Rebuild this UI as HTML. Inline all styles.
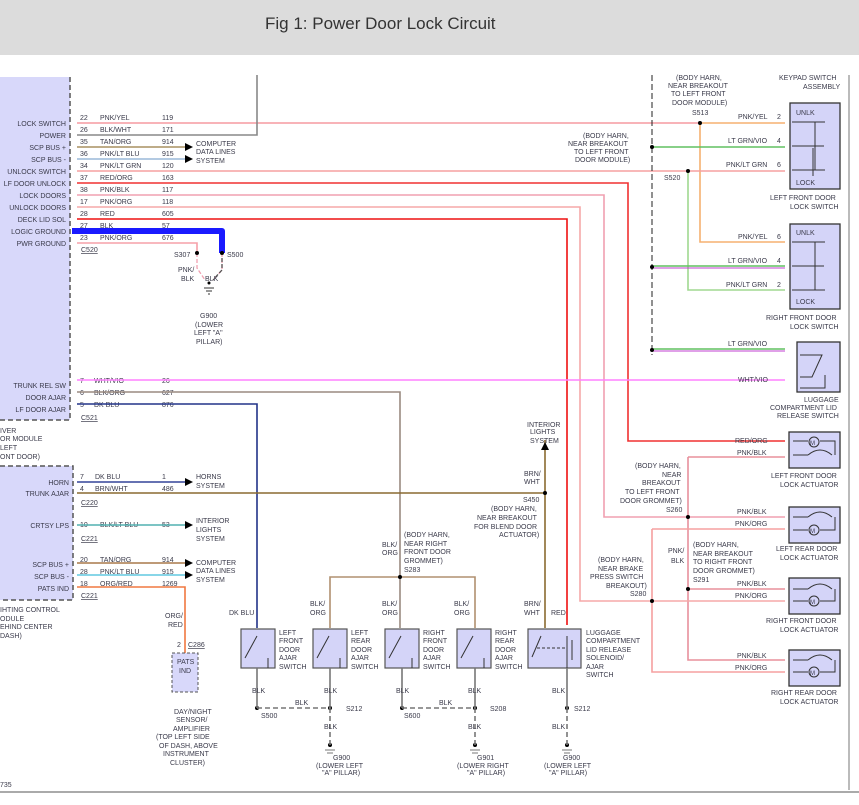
<!DOCTYPE html>
<html><head><meta charset="utf-8"><style>
body{margin:0;background:#fff;width:859px;height:805px;overflow:hidden;font-family:"Liberation Sans",sans-serif}
.hdr{position:absolute;left:0;top:0;width:859px;height:55px;background:#dcdcdc}
.hdr span{position:absolute;left:265px;top:14px;font-size:17px;color:#333}
svg{position:absolute;left:0;top:0}
svg text{font-family:"Liberation Sans",sans-serif;font-size:7px;fill:#3a3a4a}
</style></head><body>
<div class="hdr"><span>Fig 1: Power Door Lock Circuit</span></div>
<svg width="859" height="805" viewBox="0 0 859 805">
<!-- modules -->
<rect x="0" y="77" width="70" height="343" fill="#d8d8fa"/>
<line x1="70" y1="77" x2="70" y2="420" stroke="#555" stroke-dasharray="5,3" stroke-width="1.5"/>
<line x1="0" y1="420" x2="70" y2="420" stroke="#555" stroke-dasharray="5,3" stroke-width="1.5"/>
<rect x="0" y="466" width="73" height="134" fill="#d8d8fa"/>
<path d="M0 466H73V600H0" fill="none" stroke="#555" stroke-dasharray="5,3" stroke-width="1.5"/>
<line x1="849" y1="75" x2="849" y2="790" stroke="#777"/>
<line x1="0" y1="792" x2="859" y2="792" stroke="#555"/>
<text x="0" y="787">735</text>
<!-- labels left module 1 -->
<g text-anchor="end">
<text x="66" y="126">LOCK SWITCH</text><text x="66" y="138">POWER</text><text x="66" y="150">SCP BUS +</text><text x="66" y="162">SCP BUS -</text><text x="66" y="174">UNLOCK SWITCH</text><text x="66" y="186">LF DOOR UNLOCK</text><text x="66" y="198">LOCK DOORS</text><text x="66" y="210">UNLOCK DOORS</text><text x="66" y="222">DECK LID SOL</text><text x="66" y="234">LOGIC GROUND</text><text x="66" y="246">PWR GROUND</text>
<text x="66" y="388">TRUNK REL SW</text><text x="66" y="400">DOOR AJAR</text><text x="66" y="412">LF DOOR AJAR</text>
<text x="69" y="485">HORN</text><text x="69" y="496">TRUNK AJAR</text><text x="69" y="528">CRTSY LPS</text><text x="69" y="567">SCP BUS +</text><text x="69" y="579">SCP BUS -</text><text x="69" y="591">PATS IND</text>
</g>
<g>
<text x="80" y="120">22</text><text x="100" y="120">PNK/YEL</text><text x="162" y="120">119</text>
<text x="80" y="132">26</text><text x="100" y="132">BLK/WHT</text><text x="162" y="132">171</text>
<text x="80" y="144">35</text><text x="100" y="144">TAN/ORG</text><text x="162" y="144">914</text>
<text x="80" y="156">36</text><text x="100" y="156">PNK/LT BLU</text><text x="162" y="156">915</text>
<text x="80" y="168">34</text><text x="100" y="168">PNK/LT GRN</text><text x="162" y="168">120</text>
<text x="80" y="180">37</text><text x="100" y="180">RED/ORG</text><text x="162" y="180">163</text>
<text x="80" y="192">38</text><text x="100" y="192">PNK/BLK</text><text x="162" y="192">117</text>
<text x="80" y="204">17</text><text x="100" y="204">PNK/ORG</text><text x="162" y="204">118</text>
<text x="80" y="216">28</text><text x="100" y="216">RED</text><text x="162" y="216">605</text>
<text x="80" y="228">27</text><text x="100" y="228">BLK</text><text x="162" y="228">57</text>
<text x="80" y="240">23</text><text x="100" y="240">PNK/ORG</text><text x="162" y="240">676</text>
<text x="81" y="252" text-decoration="underline">C520</text>
<text x="80" y="383">7</text><text x="94" y="383">WHT/VIO</text><text x="162" y="383">26</text>
<text x="80" y="395">6</text><text x="94" y="395">BLK/ORG</text><text x="162" y="395">627</text>
<text x="80" y="407">5</text><text x="94" y="407">DK BLU</text><text x="162" y="407">876</text>
<text x="81" y="420" text-decoration="underline">C521</text>
<text x="0" y="433">IVER</text><text x="0" y="441">OR MODULE</text><text x="0" y="450">LEFT</text><text x="0" y="459">ONT DOOR)</text>
<text x="80" y="479">7</text><text x="95" y="479">DK BLU</text><text x="162" y="479">1</text>
<text x="80" y="491">4</text><text x="95" y="491">BRN/WHT</text><text x="162" y="491">486</text>
<text x="81" y="505" text-decoration="underline">C220</text>
<text x="80" y="527">10</text><text x="100" y="527">BLK/LT BLU</text><text x="162" y="527">53</text>
<text x="81" y="541" text-decoration="underline">C221</text>
<text x="80" y="562">20</text><text x="100" y="562">TAN/ORG</text><text x="162" y="562">914</text>
<text x="80" y="574">28</text><text x="100" y="574">PNK/LT BLU</text><text x="162" y="574">915</text>
<text x="80" y="586">18</text><text x="100" y="586">ORG/RED</text><text x="162" y="586">1269</text>
<text x="81" y="598" text-decoration="underline">C221</text>
<text x="0" y="612">IHTING CONTROL</text><text x="0" y="621">ODULE</text><text x="0" y="629">EHIND CENTER</text><text x="0" y="638">DASH)</text>
</g>
<!-- wires top -->
<g fill="none" stroke-width="1.6">
<path d="M77 123H700" stroke="#f59aa0"/><path d="M700 123H785M700 123V242H785" stroke="#f5b070"/>
<path d="M77 135H257V75" stroke="#888"/>
<path d="M77 147H187" stroke="#a89060"/><path d="M77 159H187" stroke="#9ab8d8"/>
<path d="M77 171H785" stroke="#f5a0a0"/><path d="M688 171V290H785" stroke="#a0d890"/>
<path d="M77 183H628V441H785" stroke="#f03030"/>
<path d="M77 195H604V517H785" stroke="#f0a0b0"/>
<path d="M688 457V660H785M688 457H785M688 589H785" stroke="#e8909c"/>
<path d="M77 207H580V601H785" stroke="#f5a8a8"/>
<path d="M652 529V672H785M652 529H785" stroke="#f5a0a0"/>
<path d="M77 219H567V625" stroke="#ee1111"/>
<path d="M77 243H197V253" stroke="#f5a0a8"/>
<path d="M652 147H785M652 266H785M652 349H785" stroke="#60c060"/>
<path d="M652 268H785M652 351H785" stroke="#c040d0" stroke-width="1"/>
<path d="M77 380H785" stroke="#ff80ff"/>
<path d="M77 392H400V628" stroke="#9a8a80"/>
<path d="M77 404H257V628" stroke="#223388"/>
<path d="M77 482H187" stroke="#334499"/>
<path d="M77 493H545M545 440V628" stroke="#8a6a30"/>
<path d="M77 525H187" stroke="#50b0b0"/>
<path d="M77 563H187" stroke="#a8784a"/><path d="M77 575H187" stroke="#60c8e0"/>
<path d="M77 587H185V655" stroke="#f07840"/>
<path d="M330 628V577H475V628" stroke="#b09070"/>
</g>
<path d="M72 231H222V253" fill="none" stroke="#1a1aff" stroke-width="6" stroke-linejoin="round"/>
<path d="M197 253V268L205 280M222 253V270L213 280" fill="none" stroke="#f0a0b0" stroke-width="1.3" stroke-dasharray="4,2"/>
<path d="M222 258V270L213 280" fill="none" stroke="#555" stroke-width="1.3" stroke-dasharray="4,2"/>
<line x1="652" y1="75" x2="652" y2="355" stroke="#222" stroke-dasharray="6,3"/>
<!-- arrows -->
<g fill="#000">
<path d="M185 143l8 4-8 4z"/><path d="M185 155l8 4-8 4z"/><path d="M185 478l8 4-8 4z"/><path d="M185 521l8 4-8 4z"/><path d="M185 559l8 4-8 4z"/><path d="M185 571l8 4-8 4z"/><path d="M541 450l4-8 4 8z"/>
<circle cx="700" cy="123" r="2"/><circle cx="688" cy="171" r="2"/><circle cx="652" cy="147" r="2"/><circle cx="652" cy="267" r="2"/><circle cx="652" cy="350" r="2"/>
<circle cx="197" cy="253" r="2"/><circle cx="222" cy="253" r="2"/><circle cx="545" cy="493" r="2"/><circle cx="400" cy="577" r="2"/>
<circle cx="688" cy="517" r="2"/><circle cx="688" cy="589" r="2"/><circle cx="652" cy="601" r="2"/>
<circle cx="257" cy="708" r="2"/><circle cx="330" cy="708" r="2"/><circle cx="402" cy="708" r="2"/><circle cx="475" cy="708" r="2"/><circle cx="567" cy="708" r="2"/>
<circle cx="330" cy="745" r="2"/><circle cx="475" cy="745" r="2"/><circle cx="567" cy="745" r="2"/><circle cx="209" cy="283" r="1.5"/>
</g>
<path d="M204 288h10M206 291h6M208 294h2" stroke="#333"/>
<g>
<text x="196" y="146">COMPUTER</text><text x="196" y="154">DATA LINES</text><text x="196" y="163">SYSTEM</text>
<text x="174" y="257">S307</text><text x="227" y="257">S500</text>
<text x="178" y="272">PNK/</text><text x="181" y="281">BLK</text><text x="205" y="281">BLK</text>
<text x="200" y="318">G900</text><text x="195" y="327">(LOWER</text><text x="194" y="335">LEFT "A"</text><text x="196" y="344">PILLAR)</text>
<text x="196" y="479">HORNS</text><text x="196" y="488">SYSTEM</text>
<text x="196" y="523">INTERIOR</text><text x="196" y="532">LIGHTS</text><text x="196" y="541">SYSTEM</text>
<text x="196" y="565">COMPUTER</text><text x="196" y="573">DATA LINES</text><text x="196" y="582">SYSTEM</text>
<text x="527" y="427">INTERIOR</text><text x="530" y="434">LIGHTS</text><text x="530" y="443">SYSTEM</text>
<text x="524" y="476">BRN/</text><text x="524" y="484">WHT</text>
<text x="523" y="502">S450</text><text x="491" y="511">(BODY HARN,</text><text x="477" y="520">NEAR BREAKOUT</text><text x="474" y="529">FOR BLEND DOOR</text><text x="499" y="537">ACTUATOR)</text>
<text x="382" y="547">BLK/</text><text x="382" y="555">ORG</text>
<text x="404" y="537">(BODY HARN,</text><text x="404" y="546">NEAR RIGHT</text><text x="404" y="554">FRONT DOOR</text><text x="404" y="563">GROMMET)</text><text x="404" y="572">S283</text>
<text x="310" y="606">BLK/</text><text x="310" y="615">ORG</text><text x="382" y="606">BLK/</text><text x="382" y="615">ORG</text><text x="454" y="606">BLK/</text><text x="454" y="615">ORG</text>
<text x="524" y="606">BRN/</text><text x="524" y="615">WHT</text><text x="551" y="615">RED</text>
<text x="229" y="615">DK BLU</text>
<text x="165" y="618">ORG/</text><text x="168" y="627">RED</text>
<text x="177" y="647">2</text><text x="188" y="647" text-decoration="underline">C286</text>
<text x="174" y="714">DAY/NIGHT</text><text x="176" y="722">SENSOR/</text><text x="173" y="731">AMPLIFIER</text><text x="156" y="739">(TOP LEFT SIDE</text><text x="159" y="748">OF DASH, ABOVE</text><text x="163" y="756">INSTRUMENT</text><text x="170" y="765">CLUSTER)</text>
</g>
<!-- pats box -->
<rect x="172" y="653" width="26" height="39" fill="#d8d8fa" stroke="#555" stroke-dasharray="3,2"/>
<text x="177" y="664">PATS</text><text x="179" y="673">IND</text>
<!-- ajar switches -->
<g fill="#d4d4f8" stroke="#555" stroke-width="1.2">
<rect x="241" y="629" width="34" height="39"/><rect x="313" y="629" width="34" height="39"/><rect x="385" y="629" width="34" height="39"/><rect x="457" y="629" width="34" height="39"/><rect x="528" y="629" width="53" height="39"/>
</g>
<g stroke="#333" fill="none">
<path d="M257 636L245 658M329 636L317 658M401 636L389 658M473 636L461 658M541 636L532 657"/>
<path d="M268 658V668M340 658V668M412 658V668M484 658V668"/>
<path d="M537 648H566" stroke-dasharray="3,2"/><path d="M567 636V668M572 640V660"/>
</g>
<g fill="none" stroke-width="1.6">
<path d="M257 668V708M330 668V708M402 668V708M475 668V708M567 668V708" stroke="#777"/>
<path d="M257 708H330M402 708H475M330 708V745M475 708V745M567 708V745" stroke="#777" stroke-dasharray="5,3"/>
</g>
<path d="M325 750h10M327 753h6M470 750h10M472 753h6M562 750h10M564 753h6" stroke="#777"/>
<g>
<text x="279" y="635">LEFT</text><text x="279" y="643">FRONT</text><text x="279" y="652">DOOR</text><text x="279" y="660">AJAR</text><text x="279" y="669">SWITCH</text>
<text x="351" y="635">LEFT</text><text x="351" y="643">REAR</text><text x="351" y="652">DOOR</text><text x="351" y="660">AJAR</text><text x="351" y="669">SWITCH</text>
<text x="423" y="635">RIGHT</text><text x="423" y="643">FRONT</text><text x="423" y="652">DOOR</text><text x="423" y="660">AJAR</text><text x="423" y="669">SWITCH</text>
<text x="495" y="635">RIGHT</text><text x="495" y="643">REAR</text><text x="495" y="652">DOOR</text><text x="495" y="660">AJAR</text><text x="495" y="669">SWITCH</text>
<text x="586" y="635">LUGGAGE</text><text x="586" y="643">COMPARTMENT</text><text x="586" y="652">LID RELEASE</text><text x="586" y="660">SOLENOID/</text><text x="586" y="669">AJAR</text><text x="586" y="677">SWITCH</text>
<text x="252" y="693">BLK</text><text x="324" y="693">BLK</text><text x="396" y="693">BLK</text><text x="468" y="693">BLK</text><text x="552" y="693">BLK</text>
<text x="295" y="705">BLK</text><text x="439" y="705">BLK</text>
<text x="261" y="718">S500</text><text x="346" y="711">S212</text><text x="404" y="718">S600</text><text x="490" y="711">S208</text><text x="574" y="711">S212</text>
<text x="324" y="729">BLK</text><text x="468" y="729">BLK</text><text x="552" y="729">BLK</text>
<text x="333" y="760">G900</text><text x="316" y="768">(LOWER LEFT</text><text x="322" y="775">"A" PILLAR)</text>
<text x="477" y="760">G901</text><text x="457" y="768">(LOWER RIGHT</text><text x="467" y="775">"A" PILLAR)</text>
<text x="563" y="760">G900</text><text x="544" y="768">(LOWER LEFT</text><text x="549" y="775">"A" PILLAR)</text>
</g>
<!-- right side -->
<g fill="#d4d4f8" stroke="#333" stroke-width="1.3">
<rect x="790" y="103" width="50" height="86"/><rect x="790" y="224" width="50" height="85"/><rect x="797" y="342" width="43" height="50"/>
<rect x="789" y="432" width="51" height="36"/><rect x="789" y="507" width="51" height="36"/><rect x="789" y="578" width="51" height="36"/><rect x="789" y="650" width="51" height="36"/>
</g>
<g stroke="#333" fill="none">
<path d="M792 122H825M792 146H824M792 170H825M815 122V170M813 148V176" />
<path d="M792 242H825M792 266H824M792 290H825M815 242V290"/>
<path d="M800 355H822L812 377H800M825 375V388H800"/>
<path d="M793 441H808M793 455H808M820 441H835V455M808 455Q820 445 832 455"/>
<path d="M793 517H808M793 530H808M820 530H835V517M808 517Q820 507 832 517"/>
<path d="M793 589H808M793 601H808M820 601H835V589M808 589Q820 579 832 589"/>
<path d="M793 660H808M793 672H808M820 672H835V660M808 660Q820 650 832 660"/>
</g>
<g fill="none" stroke="#333"><circle cx="814" cy="442" r="5"/><circle cx="814" cy="530" r="5"/><circle cx="814" cy="601" r="5"/><circle cx="814" cy="672" r="5"/></g>
<g font-size="6"><text x="810" y="445" style="font-size:6px">M</text><text x="810" y="533" style="font-size:6px">M</text><text x="810" y="604" style="font-size:6px">M</text><text x="810" y="675" style="font-size:6px">M</text></g>
<g>
<text x="796" y="115">UNLK</text><text x="796" y="185">LOCK</text><text x="796" y="235">UNLK</text><text x="796" y="304">LOCK</text>
<text x="779" y="80">KEYPAD SWITCH</text><text x="803" y="89">ASSEMBLY</text>
<text x="676" y="80">(BODY HARN,</text><text x="668" y="88">NEAR BREAKOUT</text><text x="671" y="96">TO LEFT FRONT</text><text x="672" y="105">DOOR MODULE)</text>
<text x="692" y="115">S513</text>
<text x="583" y="138">(BODY HARN,</text><text x="568" y="146">NEAR BREAKOUT</text><text x="574" y="154">TO LEFT FRONT</text><text x="575" y="162">DOOR MODULE)</text><text x="664" y="180">S520</text>
<text x="738" y="119">PNK/YEL</text><text x="777" y="119">2</text>
<text x="728" y="143">LT GRN/VIO</text><text x="777" y="143">4</text>
<text x="726" y="167">PNK/LT GRN</text><text x="777" y="167">6</text>
<text x="770" y="200">LEFT FRONT DOOR</text><text x="790" y="209">LOCK SWITCH</text>
<text x="738" y="239">PNK/YEL</text><text x="777" y="239">6</text>
<text x="728" y="263">LT GRN/VIO</text><text x="777" y="263">4</text>
<text x="726" y="287">PNK/LT GRN</text><text x="777" y="287">2</text>
<text x="766" y="320">RIGHT FRONT DOOR</text><text x="790" y="329">LOCK SWITCH</text>
<text x="728" y="346">LT GRN/VIO</text><text x="738" y="382">WHT/VIO</text>
<text x="804" y="402">LUGGAGE</text><text x="770" y="410">COMPARTMENT LID</text><text x="777" y="418">RELEASE SWITCH</text>
<text x="735" y="443">RED/ORG</text><text x="737" y="455">PNK/BLK</text>
<text x="635" y="468">(BODY HARN,</text><text x="662" y="477">NEAR</text><text x="642" y="485">BREAKOUT</text><text x="625" y="494">TO LEFT FRONT</text><text x="620" y="503">DOOR GROMMET)</text><text x="666" y="512">S260</text>
<text x="771" y="478">LEFT FRONT DOOR</text><text x="780" y="487">LOCK ACTUATOR</text>
<text x="737" y="514">PNK/BLK</text><text x="735" y="526">PNK/ORG</text>
<text x="776" y="551">LEFT REAR DOOR</text><text x="780" y="560">LOCK ACTUATOR</text>
<text x="668" y="553">PNK/</text><text x="671" y="563">BLK</text>
<text x="693" y="547">(BODY HARN,</text><text x="693" y="556">NEAR BREAKOUT</text><text x="693" y="564">TO RIGHT FRONT</text><text x="693" y="573">DOOR GROMMET)</text><text x="693" y="582">S291</text>
<text x="598" y="562">(BODY HARN,</text><text x="598" y="571">NEAR BRAKE</text><text x="590" y="579">PRESS SWITCH</text><text x="606" y="588">BREAKOUT)</text><text x="630" y="596">S280</text>
<text x="737" y="586">PNK/BLK</text><text x="735" y="598">PNK/ORG</text>
<text x="766" y="623">RIGHT FRONT DOOR</text><text x="780" y="632">LOCK ACTUATOR</text>
<text x="737" y="658">PNK/BLK</text><text x="735" y="670">PNK/ORG</text>
<text x="771" y="695">RIGHT REAR DOOR</text><text x="780" y="704">LOCK ACTUATOR</text>
</g>
</svg>
</body></html>
